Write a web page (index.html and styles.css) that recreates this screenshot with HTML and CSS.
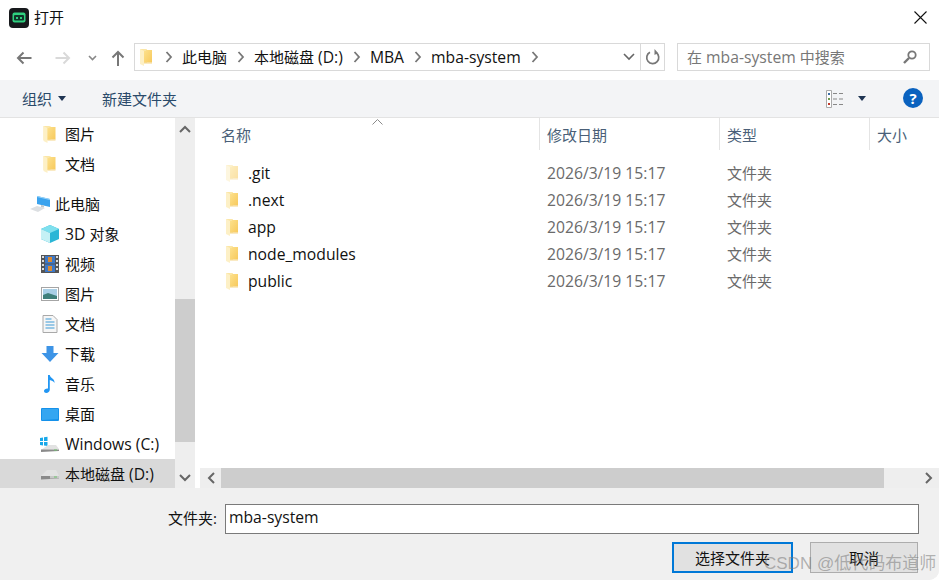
FILE: index.html
```html
<!DOCTYPE html>
<html lang="zh-CN">
<head>
<meta charset="utf-8">
<title>打开</title>
<link rel="stylesheet" href="styles.css">
</head>
<body>
<svg class="defs" width="0" height="0" aria-hidden="true">
  <defs>
    <linearGradient id="fg" x1="0" y1="0" x2="1" y2="1"><stop offset="0" stop-color="#fde28f"/><stop offset="1" stop-color="#f7c95c"/></linearGradient>
    <symbol id="folder" viewBox="0 0 12 18">
      <path d="M0 1h6l1 1v13H0z" fill="#fbe6a6"/>
      <path d="M0 1l4 2v15l-4-2z" fill="#fdf0c6"/>
      <path d="M4 3h1.500L7 1v1l5 0v12.500H4z" fill="url(#fg)"/>
      <path d="M4 14.500h8v1H4z" fill="#f4d586"/>
    </symbol>
    <symbol id="chev" viewBox="0 0 8 12"><path d="M1.500 1l4.500 5-4.500 5" fill="none" stroke="#777" stroke-width="1.800"/></symbol>
    <symbol id="drive" viewBox="0 0 20 12"><path d="M1 8l6-6h9l3 6z" fill="#e2e2e2"/><path d="M1 8h18v2.500l-18 1z" fill="#8a8a8a"/><path d="M10 8h9v2.500h-9z" fill="#c8c8c8"/><path d="M14 8.500h3v1h-3z" fill="#6cc46c"/></symbol>
  </defs>
</svg>
<main class="dialog">
  <header class="titlebar">
    <svg class="app-icon" width="20" height="20" viewBox="0 0 20 20"><rect width="20" height="20" rx="4" fill="#17191c"/><rect x="3.500" y="4.500" width="13" height="10" rx="2" fill="#2fd07f"/><rect x="5" y="7" width="10" height="5.500" rx="1" fill="#10352a"/><path d="M7 9h2v2H7zM11 9h2v2h-2z" fill="#2fd07f"/></svg>
    <span class="title">打开</span>
    <svg class="close" width="13" height="13" viewBox="0 0 13 13"><path d="M.5.500l12 12M12.500.500l-12 12" stroke="#111" stroke-width="1.100"/></svg>
  </header>

  <nav class="addressbar">
    <svg class="nav-back" width="16" height="14" viewBox="0 0 16 14"><path d="M15.500 7H2M7.500 1.500L2 7l5.500 5.500" fill="none" stroke="#777" stroke-width="2"/></svg>
    <svg class="nav-forward" width="16" height="14" viewBox="0 0 16 14"><path d="M.5 7H14M8.500 1.500L14 7l-5.500 5.500" fill="none" stroke="#d9d9d9" stroke-width="2"/></svg>
    <svg class="nav-down" width="9" height="6" viewBox="0 0 9 6"><path d="M1 1l3.500 3.500L8 1" fill="none" stroke="#888" stroke-width="1.600"/></svg>
    <svg class="nav-up" width="14" height="16" viewBox="0 0 14 16"><path d="M7 16V2M1.500 7.500L7 2l5.500 5.500" fill="none" stroke="#777" stroke-width="2"/></svg>
    <div class="path-box">
      <svg class="path-folder" width="12" height="18"><use href="#folder"/></svg>
      <svg class="crumb-sep first" width="8" height="12"><use href="#chev"/></svg>
      <span>此电脑</span>
      <svg class="crumb-sep" width="8" height="12"><use href="#chev"/></svg>
      <span>本地磁盘<span class="lat"> (D:)</span></span>
      <svg class="crumb-sep" width="8" height="12"><use href="#chev"/></svg>
      <span class="lat">MBA</span>
      <svg class="crumb-sep" width="8" height="12"><use href="#chev"/></svg>
      <span class="lat">mba-system</span>
      <svg class="crumb-sep" width="8" height="12"><use href="#chev"/></svg>
      <span class="spacer"></span>
      <svg class="path-drop" width="12" height="8" viewBox="0 0 12 8"><path d="M1 1l5 5 5-5" fill="none" stroke="#666" stroke-width="1.600"/></svg>
      <span class="path-refresh">
        <svg width="15" height="16" viewBox="0 0 15 16"><path d="M5 3.200A6 6 0 1 0 11 3.500" fill="none" stroke="#777" stroke-width="1.700"/><path d="M9.500 0v6l3.500-2z" fill="#777"/></svg>
      </span>
    </div>
    <div class="search-box">
      <span>在<span class="lat"> mba-system </span>中搜索</span>
      <svg width="14" height="14" viewBox="0 0 14 14"><circle cx="9" cy="5" r="3.700" fill="none" stroke="#777" stroke-width="1.800"/><path d="M6 8l-5 5" stroke="#777" stroke-width="2.400"/></svg>
    </div>
  </nav>

  <div class="toolbar">
    <span class="tool">组织<i class="caret"></i></span>
    <span class="tool new-folder">新建文件夹</span>
    <span class="spacer"></span>
    <svg class="view-icon" width="18" height="18" viewBox="0 0 18 18"><path d="M.5.500h5v17h-5z" fill="#fff" stroke="#aaa"/><path d="M2 3h2v2H2z" fill="#3b6ea5"/><path d="M2 8h2v2H2z" fill="#6a9a50"/><path d="M2 13h2v2H2z" fill="#c0392b"/><path d="M7 3.500h4M13 3.500h4M7 9h4M13 9h4M7 14.500h4M13 14.500h4" stroke="#888"/></svg>
    <i class="caret view-caret"></i>
    <span class="help">?</span>
  </div>

  <div class="main">
    <aside class="sidebar">
      <div class="tree">
        <div class="tree-row"><svg class="ico fold" width="13" height="18"><use href="#folder"/></svg><span>图片</span></div>
        <div class="tree-row"><svg class="ico fold" width="13" height="18"><use href="#folder"/></svg><span>文档</span></div>
        <div class="tree-row group pc"><svg class="ico" width="20" height="18" viewBox="0 0 20 18"><path d="M7 1l13 3v8L7 9z" fill="#3ba3ee"/><path d="M7 1l13 3v1L7 2z" fill="#9bd4f8"/><path d="M0 14l7-3 8 2-7 4z" fill="#dcdfe2"/><path d="M11 10l3 .5v2l-3-.5z" fill="#c2c8cc"/></svg><span>此电脑</span></div>
        <div class="tree-row"><svg class="ico" width="18" height="18" viewBox="0 0 18 18"><path d="M9 0l9 4v10l-9 4-9-4V4z" fill="#2bb6d6"/><path d="M9 0l9 4-9 4-9-4z" fill="#7fe0ee"/><path d="M0 4l9 4v10l-9-4z" fill="#c5f1f5"/></svg><span class="mixed"><span class="lat">3D </span>对象</span></div>
        <div class="tree-row"><svg class="ico" width="18" height="18" viewBox="0 0 18 18"><rect width="18" height="18" fill="#555"/><path d="M1 1h2v2H1zM1 5h2v2H1zM1 9h2v2H1zM1 13h2v2H1zM15 1h2v2h-2zM15 5h2v2h-2zM15 9h2v2h-2zM15 13h2v2h-2z" fill="#ddd"/><rect x="4" y="1" width="10" height="7.500" fill="#3d78c8"/><rect x="4" y="9.500" width="10" height="7.500" fill="#3d78c8"/><path d="M7 2h4v5H7zM7 11h4v5H7z" fill="#d98a32"/></svg><span>视频</span></div>
        <div class="tree-row"><svg class="ico" width="18" height="14" viewBox="0 0 18 14"><rect x=".5" y=".5" width="17" height="13" fill="#fff" stroke="#a5a5a5"/><rect x="2" y="2" width="14" height="10" fill="#a9cfe6"/><path d="M2 8l5-2 9 3v3H2z" fill="#3f7f7a"/></svg><span>图片</span></div>
        <div class="tree-row"><svg class="ico" width="15" height="18" viewBox="0 0 15 18"><path d="M.5.500h10l4 4v13H.500z" fill="#f6f6f6" stroke="#a9a9a9"/><path d="M3 4h6M3 7h9M3 10h9M3 13h9" stroke="#3d9ad6"/></svg><span>文档</span></div>
        <div class="tree-row"><svg class="ico" width="17" height="16" viewBox="0 0 17 16"><path d="M5 0h7v7h5l-8.500 9L0 7h5z" fill="#3d94e6"/></svg><span>下载</span></div>
        <div class="tree-row"><svg class="ico narrow" width="11" height="18" viewBox="0 0 11 18"><path d="M4 0h1.800c.3 3 5.200 3.500 4.700 8-1-2-3-2.500-4.700-3v9.500C5.800 16.500 4 18 2.200 18 1 18 0 17.200 0 16c0-1.500 2-2.800 4-2.500z" fill="#2196f3"/></svg><span>音乐</span></div>
        <div class="tree-row"><svg class="ico" width="18" height="13" viewBox="0 0 18 13"><rect width="18" height="13" rx="1" fill="#1591ea"/><path d="M1 1h16v10l-16 1z" fill="#35a6f1"/></svg><span>桌面</span></div>
        <div class="tree-row"><svg class="ico wide" width="20" height="16" viewBox="0 0 20 16"><path d="M0 2l3-.500V5H0zM4 1.300L7.500.800V5H4zM0 6h3v3.500L0 9zM4 6h3.500v4L4 9.500z" fill="#18a8ea"/><path d="M1 14l7-5h8l3 4z" fill="#e2e2e2"/><path d="M1 13.500h18v1.500l-18 1z" fill="#8a8a8a"/><path d="M14 13.500h3v1h-3z" fill="#6cc46c"/></svg><span class="lat mixed">Windows (C:)</span></div>
        <div class="tree-row selected"><svg class="ico wide" width="20" height="12"><use href="#drive"/></svg><span class="mixed">本地磁盘<span class="lat"> (D:)</span></span></div>
      </div>
      <div class="side-scroll">
        <span class="scroll-btn"><svg width="12" height="8" viewBox="0 0 12 8"><path d="M1 7l5-5 5 5" fill="none" stroke="#666" stroke-width="2"/></svg></span>
        <span class="side-upper"></span>
        <span class="side-thumb"></span>
        <span class="side-lower"></span>
        <span class="scroll-btn"><svg width="12" height="8" viewBox="0 0 12 8"><path d="M1 1l5 5 5-5" fill="none" stroke="#666" stroke-width="2"/></svg></span>
      </div>
    </aside>

    <section class="files">
      <div class="col-head">
        <div class="col col-name">名称<svg class="sort" width="11" height="6" viewBox="0 0 11 6"><path d="M.5 5.500l5-5 5 5" fill="none" stroke="#8a8a8a"/></svg></div>
        <div class="col col-date">修改日期</div>
        <div class="col col-type">类型</div>
        <div class="col col-size">大小</div>
      </div>
      <div class="file-list">
        <div class="file-row"><svg class="file-ico ghost" width="12" height="18"><use href="#folder"/></svg><span class="f-name">.git</span><span class="f-date">2026/3/19 15:17</span><span class="f-type">文件夹</span></div>
        <div class="file-row"><svg class="file-ico" width="12" height="18"><use href="#folder"/></svg><span class="f-name">.next</span><span class="f-date">2026/3/19 15:17</span><span class="f-type">文件夹</span></div>
        <div class="file-row"><svg class="file-ico" width="12" height="18"><use href="#folder"/></svg><span class="f-name">app</span><span class="f-date">2026/3/19 15:17</span><span class="f-type">文件夹</span></div>
        <div class="file-row"><svg class="file-ico" width="12" height="18"><use href="#folder"/></svg><span class="f-name">node_modules</span><span class="f-date">2026/3/19 15:17</span><span class="f-type">文件夹</span></div>
        <div class="file-row"><svg class="file-ico" width="12" height="18"><use href="#folder"/></svg><span class="f-name">public</span><span class="f-date">2026/3/19 15:17</span><span class="f-type">文件夹</span></div>
      </div>
      <div class="h-scroll">
        <span class="h-btn"><svg width="8" height="12" viewBox="0 0 8 12"><path d="M7 1L2 6l5 5" fill="none" stroke="#666" stroke-width="2"/></svg></span>
        <span class="h-thumb"></span>
        <span class="h-track"></span>
        <span class="h-btn"><svg width="8" height="12" viewBox="0 0 8 12"><path d="M1 1l5 5-5 5" fill="none" stroke="#666" stroke-width="2"/></svg></span>
      </div>
    </section>
  </div>

  <footer class="footer">
    <div class="name-row">
      <label class="name-label">文件夹:</label>
      <div class="name-input">mba-system</div>
    </div>
    <div class="btn-row">
      <span class="btn primary">选择文件夹</span>
      <span class="btn">取消</span>
    </div>
  </footer>
  <div class="watermark">CSDN @低代码布道师</div>
</main>
</body>
</html>
```
FILE: styles.css
```css
* { box-sizing: border-box; }
html, body { margin: 0; padding: 0; background: #fff; }
body { width: 939px; height: 580px; overflow: hidden; font-family: "Open Sans", "Noto Sans CJK SC", sans-serif; font-size: 15px; color: #111; }
.defs { position: absolute; }
.lat { font-size: 15.700px; }
.dialog { position: relative; width: 939px; height: 580px; display: flex; flex-direction: column; overflow: hidden; border-bottom-right-radius: 10px; background: #f0f0f0; }
.spacer { flex: 1; }

.titlebar { height: 40px; flex: none; display: flex; align-items: center; background: #fff; padding: 0 12px 5px 9px; }
.app-icon { flex: none; }
.title { margin-left: 5px; font-size: 15px; line-height: 18px; margin-top: -2px; }
.close { margin-left: auto; }

.addressbar { height: 40px; flex: none; display: flex; align-items: flex-start; background: #fff; padding: 3px 9px 0 16px; }
.addressbar > svg { flex: none; }
.nav-back { margin-top: 8px; }
.nav-forward { margin: 8px 0 0 23px; }
.nav-down { margin: 12px 0 0 17px; }
.nav-up { margin: 7px 0 0 14px; }
.path-box { flex: none; width: 531px; height: 28px; margin-left: 9px; border: 1px solid #d9d9d9; display: flex; align-items: center; padding-left: 5px; white-space: nowrap; line-height: 22px; padding-bottom: 1px; }
.path-folder { flex: none; }
.crumb-sep { flex: none; margin: 0 9px 0 10px; }
.crumb-sep.first { margin-left: 13px; margin-right: 9px; }
.path-drop { flex: none; margin-right: 5px; }
.path-refresh { width: 24px; height: 26px; margin-bottom: -1px; border-left: 1px solid #d9d9d9; display: flex; align-items: center; justify-content: center; flex: none; }
.search-box { flex: none; width: 253px; height: 28px; margin-left: 12px; border: 1px solid #d9d9d9; display: flex; align-items: center; justify-content: space-between; padding: 0 12px 1px 9px; color: #777; white-space: nowrap; line-height: 22px; }

.toolbar { height: 38px; flex: none; display: flex; align-items: center; background: #f3f4f6; border-bottom: 1px solid #e3e3e3; padding: 0 16px 0 22px; color: #2a4a6a; }
.tool { display: flex; align-items: center; }
.caret { display: block; width: 0; height: 0; border: 4px solid transparent; border-top: 5px solid #1f3553; border-bottom: 0; margin-left: 6px; }
.new-folder { margin-left: 36px; }
.view-icon { flex: none; }
.view-caret { margin-left: 14px; }
.help { width: 20px; height: 20px; border-radius: 50%; background: #0a62bf; color: #fff; font-weight: 700; line-height: 20px; text-align: center; margin-left: 37px; margin-top: -2px; }

.main { flex: none; height: 370px; display: flex; background: #fff; }
.sidebar { width: 200px; flex: none; display: flex; height: 370px; overflow: hidden; }
.tree { width: 175px; flex: none; height: 370px; padding-top: 1px; overflow: hidden; }
.tree-row { height: 30px; display: flex; align-items: center; padding-left: 41px; white-space: nowrap; color: #111; }
.tree-row > span { margin-top: -2px; }
.tree-row > .mixed { margin-top: 0; }
.tree-row .ico { width: 18px; margin-right: 6px; flex: none; }
.tree-row .fold { width: 13px; margin: 0 9px 0 2px; }
.tree-row .narrow { width: 11px; margin: 0 10px 0 3px; }
.tree-row .wide { width: 20px; margin: 0 5px 0 -1px; }
.group { margin-top: 10px; }
.pc { padding-left: 30px; }
.pc .ico { width: 20px; margin-right: 5px; }
.selected { background: #d9d9d9; }

.side-scroll { width: 20px; flex: none; height: 370px; background: #eee; display: flex; flex-direction: column; }
.scroll-btn { height: 21px; flex: none; display: flex; align-items: center; justify-content: center; }
.side-upper { height: 160px; flex: none; }
.side-thumb { height: 143px; flex: none; background: #cdcdcd; }
.side-lower { flex: 1; }

.files { flex: 1; min-width: 0; display: flex; flex-direction: column; }
.col-head { height: 32px; flex: none; display: flex; color: #4a5f78; }
.col { height: 100%; padding-top: 6px; border-right: 1px solid #e4e4e4; position: relative; white-space: nowrap; }
.col-name { width: 340px; padding-left: 21px; }
.col-date { width: 180px; padding-left: 7px; }
.col-type { width: 150px; padding-left: 7px; }
.col-size { width: 69px; padding-left: 7px; border-right: 0; }
.sort { position: absolute; left: 172px; top: 1px; }
.file-list { flex: 1; padding-top: 9px; min-height: 0; }
.file-row { height: 27px; display: flex; align-items: center; white-space: nowrap; line-height: 22px; }
.file-ico { flex: none; margin-left: 26px; }
.ghost { opacity: .55; }
.f-name { width: 299px; margin-left: 10px; color: #111; font-size: 15.700px; }
.f-date { width: 180px; color: #6a6a6a; font-size: 15.700px; }
.f-type { color: #6a6a6a; }
.h-scroll { height: 20px; flex: none; display: flex; background: #eee; }
.h-btn { width: 21px; flex: none; display: flex; align-items: center; justify-content: center; }
.h-thumb { width: 663px; flex: none; background: #cdcdcd; }
.h-track { flex: 1; }

.footer { flex: 1; background: #f0f0f0; padding: 16px 20px 0 0; display: flex; flex-direction: column; }
.name-row { display: flex; align-items: center; justify-content: flex-end; }
.name-label { margin-right: 8px; line-height: 22px; margin-top: -2px; }
.name-input { width: 694px; height: 30px; background: #fff; border: 1px solid #7a7a7a; padding-left: 3px; line-height: 25px; font-size: 15.700px; }
.btn-row { display: flex; justify-content: flex-end; gap: 17px; margin-top: 8px; padding-right: 1px; }
.btn { width: 108px; height: 31px; background: #e1e1e1; border: 1px solid #adadad; display: flex; align-items: center; justify-content: center; }
.primary { width: 121px; border: 2px solid #0078d7; }
.watermark { position: absolute; left: 764px; top: 552px; font-family: "Liberation Sans", "Noto Sans CJK SC", sans-serif; font-size: 17px; line-height: 24px; color: rgba(120, 120, 120, .55); white-space: nowrap; }
```
